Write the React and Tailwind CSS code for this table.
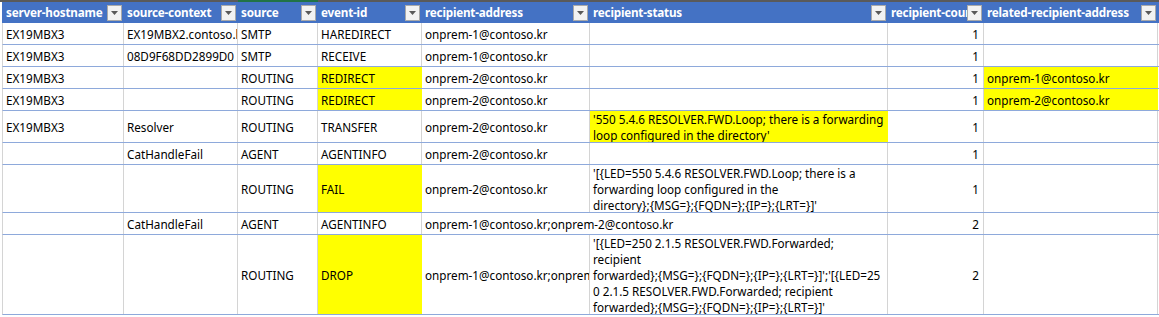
const COLS = [
  { name: "server-hostname", w: "w-[121px]" },
  { name: "source-context", w: "w-[114px]" },
  { name: "source", w: "w-[80px]" },
  { name: "event-id", w: "w-[104px]" },
  { name: "recipient-address", w: "w-[168px]" },
  { name: "recipient-status", w: "w-[298px]" },
  { name: "recipient-count", w: "w-[96px]", num: true },
  { name: "related-recipient-address", w: "w-[174px]" },
];

const Y = (t) => ({ t, y: true });

const ROWS = [
  { h: "h-[22px]", cells: ["EX19MBX3", "EX19MBX2.contoso.kr", "SMTP", "HAREDIRECT", "onprem-1@contoso.kr", "", "1", ""] },
  { h: "h-[22px]", cells: ["EX19MBX3", "08D9F68DD2899D0", "SMTP", "RECEIVE", "onprem-1@contoso.kr", "", "1", ""] },
  { h: "h-[22px]", cells: ["EX19MBX3", "", "ROUTING", Y("REDIRECT"), "onprem-2@contoso.kr", "", "1", Y("onprem-1@contoso.kr")] },
  { h: "h-[22px]", cells: ["EX19MBX3", "", "ROUTING", Y("REDIRECT"), "onprem-2@contoso.kr", "", "1", Y("onprem-2@contoso.kr")] },
  {
    h: "h-[32px]",
    cells: [
      "EX19MBX3",
      "Resolver",
      "ROUTING",
      "TRANSFER",
      "onprem-2@contoso.kr",
      Y(["'550 5.4.6 RESOLVER.FWD.Loop; there is a forwarding", "loop configured in the directory'"]),
      "1",
      "",
    ],
  },
  { h: "h-[22px]", cells: ["", "CatHandleFail", "AGENT", "AGENTINFO", "onprem-2@contoso.kr", "", "1", ""] },
  {
    h: "h-[48px]",
    cells: [
      "",
      "",
      "ROUTING",
      Y("FAIL"),
      "onprem-2@contoso.kr",
      [
        "'[{LED=550 5.4.6 RESOLVER.FWD.Loop; there is a",
        "forwarding loop configured in the",
        "directory};{MSG=};{FQDN=};{IP=};{LRT=}]'",
      ],
      "1",
      "",
    ],
  },
  {
    h: "h-[22px]",
    spill: 4,
    cells: ["", "CatHandleFail", "AGENT", "AGENTINFO", "onprem-1@contoso.kr;onprem-2@contoso.kr", "", "2", ""],
  },
  {
    h: "h-[80px]",
    cells: [
      "",
      "",
      "ROUTING",
      Y("DROP"),
      "onprem-1@contoso.kr;onprem-2@contoso.kr",
      [
        "'[{LED=250 2.1.5 RESOLVER.FWD.Forwarded;",
        "recipient",
        "forwarded};{MSG=};{FQDN=};{IP=};{LRT=}]';'[{LED=25",
        "0 2.1.5 RESOLVER.FWD.Forwarded; recipient",
        "forwarded};{MSG=};{FQDN=};{IP=};{LRT=}]'",
      ],
      "2",
      "",
    ],
  },
];

function FilterButton() {
  return (
    <div className="mr-[2px] flex h-[16px] w-[15px] shrink-0 items-center justify-center border border-[#a9a9a9] bg-[#f2f2f2]">
      <svg width="7" height="4" viewBox="0 0 7 4" className="mt-[1px]">
        <polygon points="0,0 7,0 3.5,4" fill="#595959" />
      </svg>
    </div>
  );
}

function Cell({ col, value, spill }) {
  const yellow = value && typeof value === "object" && !Array.isArray(value) && value.y;
  const content = yellow ? value.t : value;
  const lines = Array.isArray(content) ? content : [content];
  return (
    <div
      className={`flex shrink-0 items-center border-r px-[3px] ${col.w} ${
        yellow ? "border-r-[#ffff00] bg-[#ffff00]" : spill ? "border-r-transparent" : "border-r-[#d4d4d4]"
      } ${spill ? "relative z-10 overflow-visible" : "overflow-hidden"} ${col.num ? "justify-end pr-[4px]" : ""}`}
    >
      <div className="leading-[16px] whitespace-nowrap">
        {lines.map((l, i) => (
          <div key={i}>{l}</div>
        ))}
      </div>
    </div>
  );
}

export default function App() {
  return (
    <div className="h-[317px] w-[1159px] overflow-hidden bg-white text-[11.7px] text-black [font-family:'Noto_Sans',sans-serif]">
      <div className="flex h-[2px]">
        <div className="w-[238px] bg-[#5a5a5a]" />
        <div className="w-[80px] bg-[#217346]" />
        <div className="flex-1 bg-[#5a5a5a]" />
      </div>
      <div className="pl-[2px]">
        <div className="flex h-[21px] border-l border-l-[#4472c4] bg-[#4472c4] font-bold tracking-[-0.2px] text-white">
          {COLS.map((c) => (
            <div key={c.name} className={`flex shrink-0 items-center ${c.w}`}>
              <div className="min-w-0 flex-1 overflow-hidden whitespace-nowrap pl-[3px]">{c.name}</div>
              <FilterButton />
            </div>
          ))}
        </div>
        {ROWS.map((r, ri) => (
          <div key={ri} className={`flex border-b border-l border-b-[#8ea9db] border-l-[#d4d4d4] ${r.h}`}>
            {COLS.map((c, ci) => (
              <Cell key={ci} col={c} value={r.cells[ci]} spill={r.spill === ci} />
            ))}
          </div>
        ))}
      </div>
    </div>
  );
}
